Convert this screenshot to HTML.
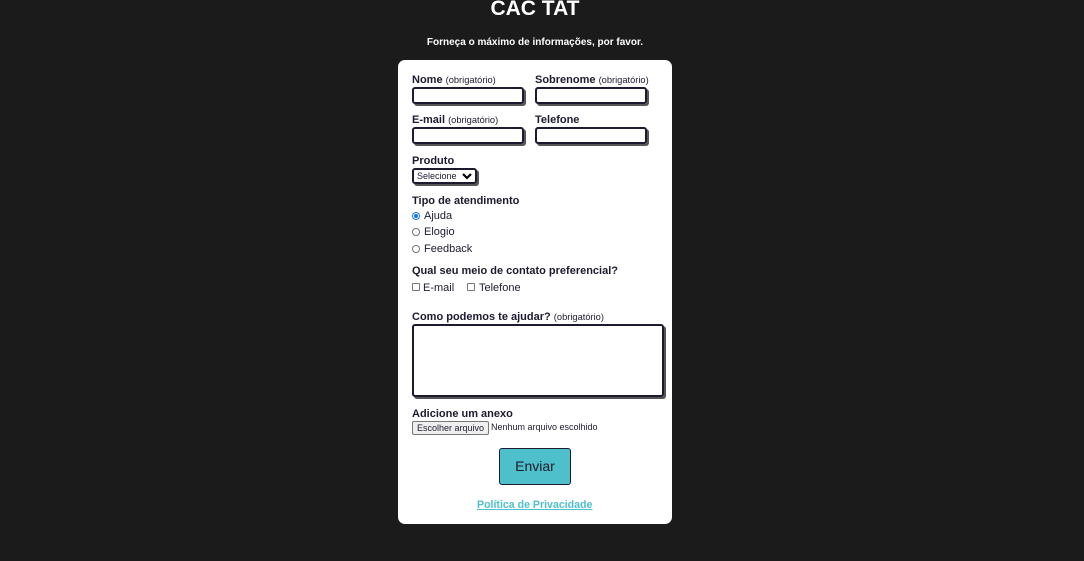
<!DOCTYPE html>
<html><head><meta charset="utf-8"><style>
*{margin:0;padding:0;box-sizing:border-box}
body{width:1084px;height:561px;background:#1b1b1b;font-family:"Liberation Sans",Arial,sans-serif;position:relative;overflow:hidden;color:#1c1a2e}
.a{position:absolute;white-space:nowrap}
h1{position:absolute;left:0;width:1070px;text-align:center;top:-3px;font-size:21px;color:#fff;font-weight:bold}
.sub{left:0;width:1070px;text-align:center;top:37px;font-size:10px;color:#fff;font-weight:bold}
.card{position:absolute;left:398px;top:60px;width:274px;height:464px;background:#fff;border-radius:7px}
.l{font-size:11px;font-weight:bold;color:#1c1a2e}
.l small{font-size:9.3px;font-weight:normal}
.in{position:absolute;width:112px;height:17px;border:2px solid #1c1a2e;border-radius:3px;box-shadow:2px 2px 0 #555}
.t{font-size:11px;color:#1c1a2e}
.r{position:absolute;width:8px;height:8px;border:1px solid #777;border-radius:50%}
.c{position:absolute;width:8px;height:8px;border:1px solid #777;border-radius:1px}
</style></head><body>
<h1>CAC TAT</h1>
<div class="a sub">Forneça o máximo de informações, por favor.</div>
<div class="card"></div>
<div class="a l" style="left:412px;top:74px">Nome <small>(obrigatório)</small></div>
<div class="a l" style="left:535px;top:74px">Sobrenome <small>(obrigatório)</small></div>
<div class="in" style="left:412px;top:87px"></div>
<div class="in" style="left:535px;top:87px"></div>
<div class="a l" style="left:412px;top:114px">E-mail <small>(obrigatório)</small></div>
<div class="a l" style="left:535px;top:114px">Telefone</div>
<div class="in" style="left:412px;top:127px"></div>
<div class="in" style="left:535px;top:127px"></div>
<div class="a l" style="left:412px;top:155px">Produto</div>
<div class="a" style="left:412px;top:168px;width:65px;height:16px;border:2px solid #1c1a2e;border-radius:3px;box-shadow:2px 2px 0 #555;font-size:9px;padding:1px 0 0 3px">Selecione <svg style="position:absolute;right:3px;top:2px" width="10" height="8" viewBox="0 0 10 8"><path d="M1 2l4 4 4-4" stroke="#000" stroke-width="2.2" fill="none"/></svg></div>
<div class="a l" style="left:412px;top:195px">Tipo de atendimento</div>
<div class="r" style="left:412px;top:212px;border-color:#1a73e8"><div style="margin:1px;width:4px;height:4px;border-radius:50%;background:#1a73e8"></div></div>
<div class="a t" style="left:424px;top:210px">Ajuda</div>
<div class="r" style="left:412px;top:228px"></div>
<div class="a t" style="left:424px;top:226px">Elogio</div>
<div class="r" style="left:412px;top:245px"></div>
<div class="a t" style="left:424px;top:243px">Feedback</div>
<div class="a l" style="left:412px;top:265px">Qual seu meio de contato preferencial?</div>
<div class="c" style="left:412px;top:283px"></div>
<div class="a t" style="left:423px;top:282px">E-mail</div>
<div class="c" style="left:467px;top:283px"></div>
<div class="a t" style="left:479px;top:282px">Telefone</div>
<div class="a l" style="left:412px;top:311px">Como podemos te ajudar? <small>(obrigatório)</small></div>
<div class="a" style="left:412px;top:324px;width:252px;height:73px;border:2px solid #1c1a2e;border-radius:3px;box-shadow:2px 2px 0 #555"></div>
<div class="a l" style="left:412px;top:408px">Adicione um anexo</div>
<div class="a" style="left:412px;top:421px;width:77px;height:14px;border:1px solid #777;background:#efefef;border-radius:2px;font-size:9px;padding:0 0 0 4px;line-height:12px">Escolher arquivo</div>
<div class="a" style="left:491px;top:422px;font-size:9px">Nenhum arquivo escolhido</div>
<div class="a" style="left:499px;top:448px;width:72px;height:37px;background:#4dc0cb;border:1px solid #1c1a2e;border-radius:3px;font-size:14px;text-align:center;line-height:35px;color:#1c1a2e">Enviar</div>
<div class="a" style="left:477px;top:499px;font-size:10.6px;font-weight:bold;color:#4dc0cb;text-decoration:underline">Política de Privacidade</div>
</body></html>
